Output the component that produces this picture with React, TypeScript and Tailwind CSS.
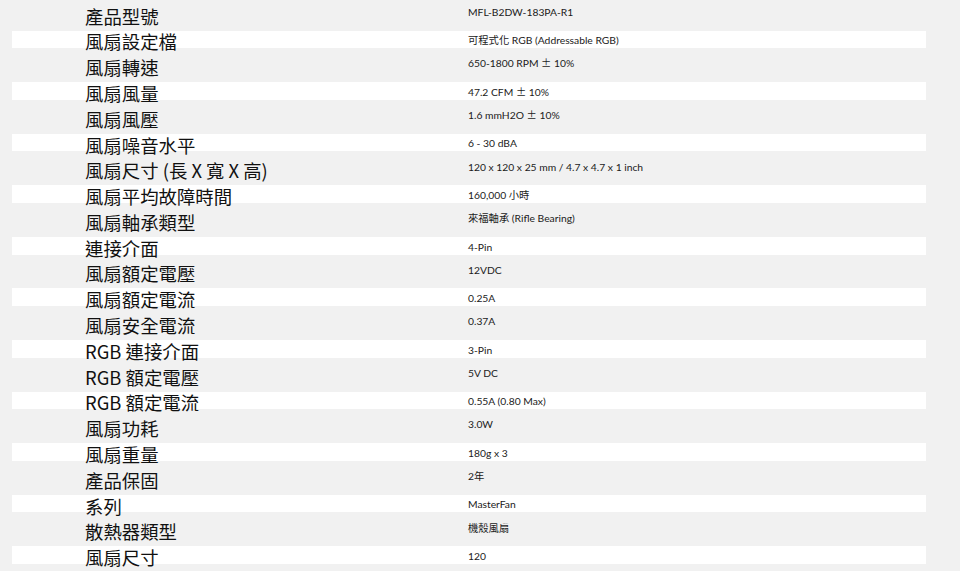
const specs: [string, string][] = [
  ['產品型號', 'MFL-B2DW-183PA-R1'],
  ['風扇設定檔', '可程式化 RGB (Addressable RGB)'],
  ['風扇轉速', '650-1800 RPM ± 10%'],
  ['風扇風量', '47.2 CFM ± 10%'],
  ['風扇風壓', '1.6 mmH2O ± 10%'],
  ['風扇噪音水平', '6 - 30 dBA'],
  ['風扇尺寸 (長 X 寬 X 高)', '120 x 120 x 25 mm / 4.7 x 4.7 x 1 inch'],
  ['風扇平均故障時間', '160,000 小時'],
  ['風扇軸承類型', '來福軸承 (Rifle Bearing)'],
  ['連接介面', '4-Pin'],
  ['風扇額定電壓', '12VDC'],
  ['風扇額定電流', '0.25A'],
  ['風扇安全電流', '0.37A'],
  ['RGB 連接介面', '3-Pin'],
  ['RGB 額定電壓', '5V DC'],
  ['RGB 額定電流', '0.55A (0.80 Max)'],
  ['風扇功耗', '3.0W'],
  ['風扇重量', '180g x 3'],
  ['產品保固', '2年'],
  ['系列', 'MasterFan'],
  ['散熱器類型', '機殼風扇'],
  ['風扇尺寸', '120'],
];

// the ± sign comes out of the CJK font on the original page, wider than Lato's
function Value({ text }: { text: string }) {
  const parts = text.split('±');
  return (
    <>
      {parts.map((p, i) => (
        <span key={i}>
          {i > 0 && <span className="font-['Noto_Sans_CJK_TC',sans-serif]">±</span>}
          {p}
        </span>
      ))}
    </>
  );
}

function SpecRow({ label, value, odd }: { label: string; value: string; odd: boolean }) {
  return (
    <div
      className={
        odd
          ? 'flex h-[17.7px] items-start bg-white'
          : 'flex h-[33.9px] items-start bg-[#f1f1f1]'
      }
    >
      <div className="flex h-full w-[456px] shrink-0 items-center pl-[73px]">
        {/* label overflows the thin white rows, keep it above the next row's background */}
        <span className="relative z-10 whitespace-nowrap pt-[4px] font-['Noto_Sans_CJK_TC',sans-serif] text-[18.4px] leading-[22px] text-[#111]">
          {label}
        </span>
      </div>
      <div
        className={
          (odd ? 'pt-[3.7px] ' : 'pt-[9.2px] ') +
          "whitespace-nowrap font-['Lato','Noto_Sans_CJK_TC',sans-serif] text-[10.3px] leading-[12px] text-[#1a1a1a]"
        }
      >
        <Value text={value} />
      </div>
    </div>
  );
}

export default function App() {
  return (
    <div className="h-[571px] w-[960px] overflow-hidden bg-[#f1f1f1]">
      <div className="ml-[12px] mt-[-3.4px] flex w-[914px] flex-col">
        {specs.map(([label, value], i) => (
          <SpecRow key={label + i} label={label} value={value} odd={i % 2 === 1} />
        ))}
      </div>
    </div>
  );
}
